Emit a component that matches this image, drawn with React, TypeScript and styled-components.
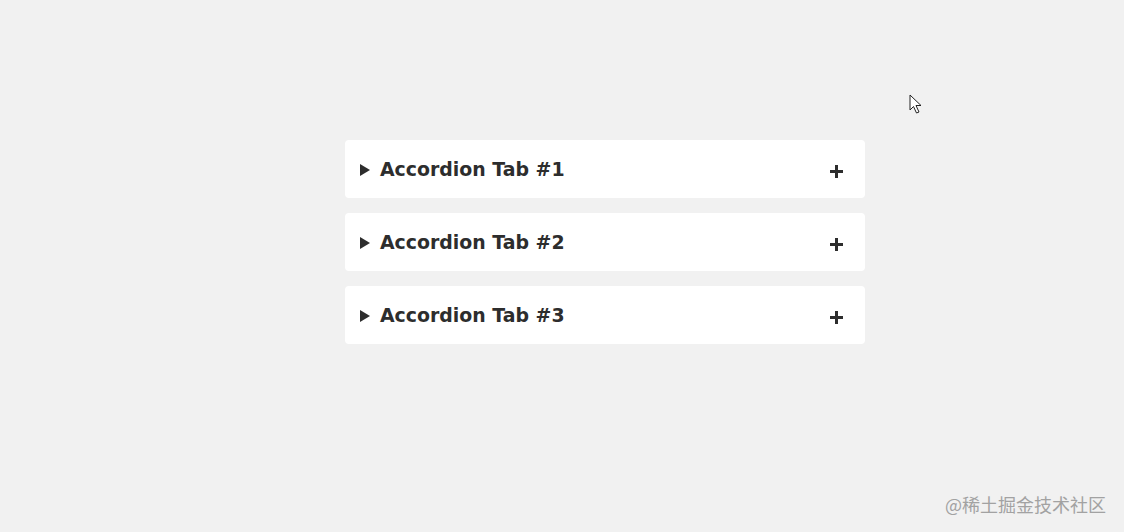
import styled, { createGlobalStyle } from "styled-components";

const GlobalStyle = createGlobalStyle`
  html, body {
    margin: 0;
    padding: 0;
    background: #f1f1f1;
  }
  body {
    width: 1124px;
    height: 532px;
    overflow: hidden;
    font-family: "DejaVu Sans", Verdana, sans-serif;
  }
`;

const tabs = ["Accordion Tab #1", "Accordion Tab #2", "Accordion Tab #3"];

const App = () => {
  return (
    <>
      <GlobalStyle />
      <Page>
        <Accordion>
          {tabs.map((label) => (
            <Tab key={label}>
              <Summary>
                <Arrow />
                <Label>{label}</Label>
                <Plus />
              </Summary>
            </Tab>
          ))}
        </Accordion>
        <Cursor width="14" height="22" viewBox="0 0 14 22">
          <path
            d="M1 1 L1 16 L4.5 12.5 L7.5 19 L10 18 L7 11.5 L12 11.5 Z"
            fill="#fff"
            stroke="#222"
            strokeWidth="1"
            strokeLinejoin="round"
          />
        </Cursor>
        <Watermark>@稀土掘金技术社区</Watermark>
      </Page>
    </>
  );
};

const Page = styled.div`
  position: relative;
  width: 1124px;
  height: 532px;
  box-sizing: border-box;
  padding: 140px 0 0 345px;
`;

const Accordion = styled.div`
  display: flex;
  flex-direction: column;
  gap: 15px;
  width: 520px;
`;

const Tab = styled.div`
  background: #ffffff;
  border-radius: 4px;
`;

const Summary = styled.div`
  height: 58px;
  display: flex;
  align-items: center;
  padding: 0 22px 0 15px;
  color: #2d2d2d;
`;

const Arrow = styled.span`
  width: 0;
  height: 0;
  border-top: 6px solid transparent;
  border-bottom: 6px solid transparent;
  border-left: 10px solid #2d2d2d;
  margin: 1px 10px 0 0;
`;

const Label = styled.span`
  flex: 1;
  font-size: 18.9px;
  font-weight: bold;
`;

const Plus = styled.span`
  position: relative;
  width: 13px;
  height: 13px;
  margin-top: 5px;

  &::before,
  &::after {
    content: "";
    position: absolute;
    background: #2d2d2d;
  }
  &::before {
    left: 0;
    right: 0;
    top: 5px;
    height: 3px;
  }
  &::after {
    top: 0;
    bottom: 0;
    left: 5px;
    width: 3px;
  }
`;

const Cursor = styled.svg`
  position: absolute;
  left: 909px;
  top: 94px;
`;

const Watermark = styled.div`
  position: absolute;
  right: 18px;
  bottom: 15px;
  font-family: "Noto Sans CJK SC", sans-serif;
  font-size: 18px;
  color: #a2a2a2;
`;

export default App;
